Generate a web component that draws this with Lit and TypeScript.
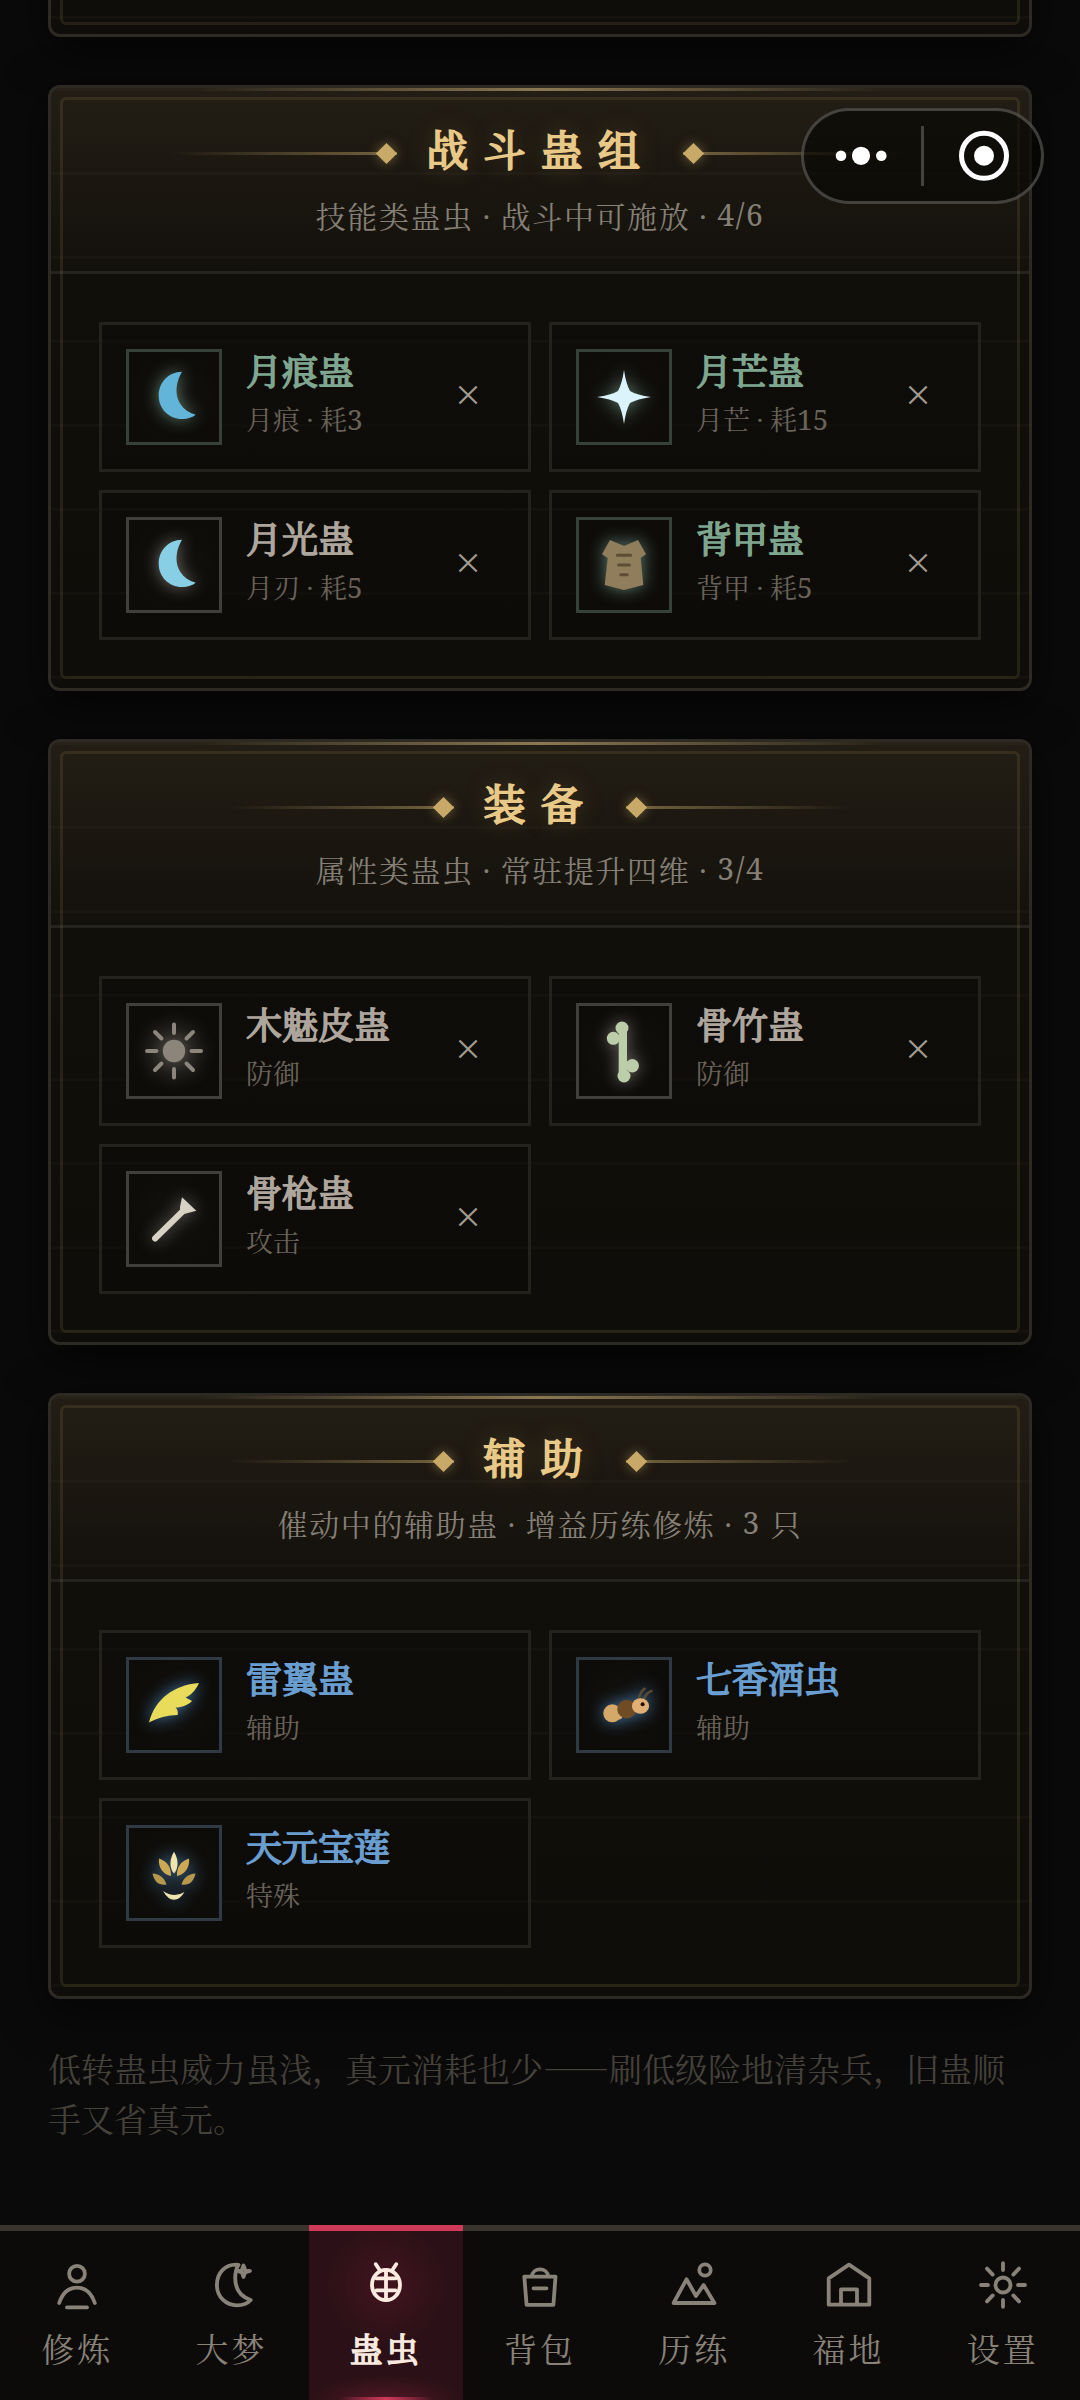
import { LitElement, html, svg, css, nothing } from "lit";
import { customElement, property } from "lit/decorators.js";

type Rank = "plain" | "green" | "blue";
interface Gu {
  name: string;
  kind: string;
  cost?: string;
  icon: string;
  rank: Rank;
  removable: boolean;
}
interface Group {
  title: string;
  lead: string;
  tail: string;
  count: string;
  unit?: string;
  items: Gu[];
}

const crescent =
  "M8 -25.3C-6 -25.3 -15.3 -14 -15.3 -1.5C-15.3 12 -5 22 8 22C14 22 19 20 21.7 17.7C8 14 2.5 3 2.5 -6C2.5 -14 5 -20 8 -25.3Z";

const guIcons: Record<string, unknown> = {
  moonScar: svg`<path d=${crescent} fill="#62b4d9"/>`,
  moonLight: svg`<path d=${crescent} fill="#88cfe6"/>`,
  star: svg`<path d="M0 -27Q2 -13 6 -6Q13 -2 27 0Q13 2 6 6Q2 13 0 27Q-2 13 -6 6Q-13 2 -27 0Q-13 -2 -6 -6Q-2 -13 0 -27Z" fill="#dbf3fb"/>`,
  armor: svg`<path d="M-14 -25L0 -19L14 -25L22 -10.7L16.7 -7L19.3 20L0 25L-19.3 20L-16.3 -7L-22 -10.7Z" fill="#8f7d5c"/>
    <path d="M-6.6 -9.7H6.6M-5.4 0H5.4M-3.2 9.7H3.2" stroke="#5f4d35" stroke-width="3" stroke-linecap="round"/>`,
  sun: svg`<circle r="11.2" fill="#8c857b"/>
    <path d="M0 -26.5V-18M0 18V26.5M-27 0H-17.5M17.5 0H27M-19 -19L-12.5 -12.5M19 -19L12.5 -12.5M-19 19L-12.5 12.5M19 19L12.5 12.5" stroke="#8c857b" stroke-width="4" stroke-linecap="round"/>`,
  bone: svg`<g fill="#bccdaa"><circle cx="-2" cy="-23" r="6.5"/><circle cx="-10.7" cy="-12.7" r="6.5"/><circle cx="8.3" cy="14.7" r="6.7"/><circle cx="0" cy="25" r="6.5"/><path d="M-5.3 -22H3V25H-5.3Z"/></g>`,
  spear: svg`<path d="M-19 19.5L9 -8" stroke="#d8d2c4" stroke-width="6" stroke-linecap="round"/>
    <path d="M8 -21.7L22.3 -8.3L12 -5.4Q8.5 -4.5 6 -8V-12Z" fill="#d8d2c4"/>`,
  wing: svg`<path d="M-25 17.6C-19 -6 0 -20 25 -22C22 -15 17 -10 11.5 -7.5L18 -4C14 0 8 2.5 1.5 2.5C3.7 4.5 4.2 7 3.7 10C-6 10 -17 13 -25 17.6Z" fill="#e8dc5a"/>`,
  worm: svg`<circle cx="-11.7" cy="8.3" r="9" fill="#d4a868"/><circle cx="-5.5" cy="10.5" r="4" fill="#d4a868"/>
    <ellipse cx="2.8" cy="4" rx="9.6" ry="9.2" fill="#6f4c24"/>
    <path d="M15 -6.5Q16 -13 20.5 -16.3M20 -6Q22 -12 27.5 -14" fill="none" stroke="#574a34" stroke-width="2.6" stroke-linecap="round"/>
    <ellipse cx="16.5" cy="1" rx="8.6" ry="7.8" fill="#e0b074"/><circle cx="18.6" cy="-.7" r="2" fill="#240a08"/>`,
  lotus: svg`<path d="M0 -21.3C5 -13 4.5 -5 0 .5C-4.500 -5 -5 -13 0 -21.3Z" fill="#efe3ae"/>
    <path d="M-15 -14.500C-6.500 -12 -2.500 -5 -3 3C-10.500 1.500 -16 -5 -15 -14.500Z M15 -14.500C6.500 -12 2.500 -5 3 3C10.500 1.500 16 -5 15 -14.500Z" fill="#cda953"/>
    <path d="M-21.500 .5C-14 1 -9.500 5 -7.500 11.500C-14 13 -20 9 -21.500 .5Z M21.500 .5C14 1 9.500 5 7.500 11.500C14 13 20 9 21.500 .5Z" fill="#b5984c"/>
    <path d="M-11 18Q0 25.500 10.500 19Q6 26.700 0 26.700Q-6 26.700 -11 18Z" fill="#efe3ae"/>`,
};

const navIcons: Record<string, unknown> = {
  person: svg`<circle cx="27" cy="15.700" r="7.900"/><path d="M9.200 45C12.500 35 19 29.600 27 29.600S41.500 35 44.800 45M17 49.400H37"/>`,
  moon: svg`<path d="M34.500 6.800C20.500 5.500 12.900 15.500 12.900 27C12.900 39 22 47.300 33 47.300C39 47.300 43.500 45.500 46.700 42C36 38.500 31.200 30 31.200 20C31.200 14 32.500 10 34.500 6.800Z"/><path d="M39.500 7.500L41 11.700L46 13L41 14.500L39.500 19L38 14.500L33.500 13L38 11.700Z"/>`,
  bug: svg`<ellipse cx="27" cy="27" rx="14" ry="15.200"/><path d="M27 12V42M17.500 20.300H36.500M17.500 32.300H36.500M16.800 6.200L20.800 12.200M37.200 6.200L33.200 12.200"/>`,
  bag: svg`<path d="M11.300 18.600H42.500L40.400 46.800H13.600ZM18.800 18.600C19.500 9 34.500 9 35.200 18.600M20.500 30.300H33.500"/>`,
  hills: svg`<circle cx="38" cy="12" r="5.700"/><path d="M6.600 45L19.500 21.300L29 38L36.600 27L47.400 45Z"/>`,
  house: svg`<path d="M27 6.700L47.300 20.300V46.700H6.700V20.300ZM19 46.700V31.300H35V46.700"/>`,
  gear: svg`<circle cx="27" cy="27" r="7.500"/><path d="M27 5.200V12M27 42V48.800M5 27H12M42 27H49M11 10.600L16.700 16.600M43 10.600L37.300 16.600M11 43.400L16.700 37.400M43 43.400L37.300 37.400"/>`,
};

const groups: Group[] = [
  {
    title: "战斗蛊组", lead: "技能类蛊虫", tail: "战斗中可施放", count: "4/6",
    items: [
      { name: "月痕蛊", kind: "月痕", cost: "3", icon: "moonScar", rank: "green", removable: true },
      { name: "月芒蛊", kind: "月芒", cost: "15", icon: "star", rank: "green", removable: true },
      { name: "月光蛊", kind: "月刃", cost: "5", icon: "moonLight", rank: "plain", removable: true },
      { name: "背甲蛊", kind: "背甲", cost: "5", icon: "armor", rank: "green", removable: true },
    ],
  },
  {
    title: "装备", lead: "属性类蛊虫", tail: "常驻提升四维", count: "3/4",
    items: [
      { name: "木魅皮蛊", kind: "防御", icon: "sun", rank: "plain", removable: true },
      { name: "骨竹蛊", kind: "防御", icon: "bone", rank: "plain", removable: true },
      { name: "骨枪蛊", kind: "攻击", icon: "spear", rank: "plain", removable: true },
    ],
  },
  {
    title: "辅助", lead: "催动中的辅助蛊", tail: "增益历练修炼", count: "3", unit: "只",
    items: [
      { name: "雷翼蛊", kind: "辅助", icon: "wing", rank: "blue", removable: false },
      { name: "七香酒虫", kind: "辅助", icon: "worm", rank: "blue", removable: false },
      { name: "天元宝莲", kind: "特殊", icon: "lotus", rank: "blue", removable: false },
    ],
  },
];

const tabs = [
  { label: "修炼", icon: "person" },
  { label: "大梦", icon: "moon" },
  { label: "蛊虫", icon: "bug", active: true },
  { label: "背包", icon: "bag" },
  { label: "历练", icon: "hills" },
  { label: "福地", icon: "house" },
  { label: "设置", icon: "gear" },
];

const panel = css`
  .panel {
    position: relative;
    box-sizing: border-box;
    border: 3px solid #2d2a23;
    border-radius: 12px;
    background:
      repeating-linear-gradient(180deg, rgba(200, 180, 140, 0.026) 0 3px, transparent 3px 84px),
      linear-gradient(180deg, #12100b, #0e0d09);
    background-clip: padding-box;
    box-shadow: 0 12px 48px rgba(0, 0, 0, 0.6);
  }
  .panel::after {
    content: "";
    position: absolute;
    inset: 9px;
    border: 3px solid rgba(160, 130, 85, 0.17);
    border-radius: 6px;
    pointer-events: none;
  }
`;

@customElement("gu-slot")
class GuSlot extends LitElement {
  @property({ attribute: false }) gu!: Gu;
  static styles = css`
    :host { display: block; }
    .slot {
      display: flex;
      align-items: center;
      gap: 24px;
      box-sizing: border-box;
      height: 150px;
      padding: 24px;
      border: 3px solid #23221d;
      background: rgba(8, 8, 6, 0.25);
    }
    .plain { --name: #aea69d; --edge: #413f3b; --glow: rgba(176, 168, 159, 0.6); }
    .green { --name: #7fa68f; --edge: #35413a; --glow: rgba(127, 166, 143, 0.7); }
    .blue { --name: #6a9ed0; --edge: #2f3a45; --glow: rgba(80, 145, 205, 0.78); }
    .frame {
      flex: none;
      display: grid;
      place-items: center;
      box-sizing: border-box;
      width: 96px;
      height: 96px;
      border: 3px solid var(--edge);
      background: radial-gradient(circle, #131210, #0d0c09 72%);
    }
    .art { width: 90px; height: 90px; overflow: hidden; filter: drop-shadow(0 0 8px var(--glow)); }
    .text { flex: 1; display: flex; flex-direction: column; gap: 4px; white-space: nowrap; padding-bottom: 9px; }
    .name { font-size: 36px; line-height: 48px; font-weight: 400; -webkit-text-stroke: 1.6px var(--name); color: var(--name); }
    .kind { font-size: 27px; line-height: 42px; font-weight: 400; color: #6a635a; }
    .dot { display: inline-block; width: 20px; text-align: center; }
    .num { font-family: "Noto Serif", "Noto Serif CJK SC", serif; font-size: 28px; line-height: 1; }
    .drop {
      flex: none;
      width: 72px;
      line-height: 72px;
      padding-bottom: 7px;
      text-align: center;
      font-family: "Noto Sans", sans-serif;
      font-size: 43px;
      font-weight: 300;
      color: #a09a8f;
    }
  `;
  render() {
    const g = this.gu;
    return html`<div class="slot ${g.rank}">
      <div class="frame"><svg class="art" viewBox="-45 -45 90 90">${guIcons[g.icon]}</svg></div>
      <div class="text">
        <div class="name">${g.name}</div>
        <div class="kind">${g.kind}${g.cost ? html`<span class="dot">·</span>耗<span class="num">${g.cost}</span>` : nothing}</div>
      </div>
      ${g.removable ? html`<div class="drop">×</div>` : nothing}
    </div>`;
  }
}

@customElement("gu-group")
class GuGroup extends LitElement {
  @property({ attribute: false }) group!: Group;
  static styles = [
    panel,
    css`
      :host { display: block; }
      .head {
        position: relative;
        box-sizing: border-box;
        height: 186px;
        padding-top: 31px;
        border-bottom: 3px solid #25231e;
        border-radius: 9px 9px 0 0;
        background: linear-gradient(180deg, rgba(180, 148, 105, 0.105), rgba(180, 148, 105, 0.01));
      }
      .head::before {
        content: "";
        position: absolute;
        top: 0;
        left: 15%;
        right: 15%;
        height: 3px;
        background: linear-gradient(90deg, transparent, #8b7853, transparent);
      }
      .title-row { display: flex; justify-content: center; align-items: center; gap: 28px; height: 60px; }
      .title {
        height: 60px;
        line-height: 58px;
        padding-left: 1.5px;
        font-size: 42px;
        font-weight: 400;
        letter-spacing: 15.2px;
        color: #e8c987;
        -webkit-text-stroke: 1.9px #e8c987;
        text-shadow: 0 0 24px rgba(201, 160, 90, 0.36);
      }
      .rule { position: relative; width: 225px; height: 3px; margin-top: 9px; background: linear-gradient(90deg, transparent, #75643f); }
      .rule.flip { background: linear-gradient(270deg, transparent, #75643f); }
      .gem {
        position: absolute;
        top: -6px;
        right: 3px;
        width: 15px;
        height: 15px;
        background: #c9a967;
        transform: rotate(45deg);
        box-shadow: 0 0 12px rgba(201, 169, 103, 0.5);
      }
      .flip .gem { right: auto; left: 3px; }
      .sub {
        display: flex;
        justify-content: center;
        margin-top: 15px;
        line-height: 42px;
        font-size: 30px;
        font-weight: 400;
        letter-spacing: 1.6px;
        color: #857f76;
      }
      .dot { width: 27px; text-align: center; }
      .num { font-family: "Noto Serif", "Noto Serif CJK SC", serif; font-size: 30px; }
      .unit { margin-left: 10px; }
      .grid { display: grid; grid-template-columns: 1fr 1fr; gap: 18px; padding: 48px; }
    `,
  ];
  render() {
    const g = this.group;
    return html`<section class="panel">
      <header class="head">
        <div class="title-row">
          <div class="rule"><i class="gem"></i></div>
          <div class="title">${g.title}</div>
          <div class="rule flip"><i class="gem"></i></div>
        </div>
        <div class="sub">
          <span>${g.lead}</span><span class="dot">·</span><span>${g.tail}</span><span class="dot">·</span><span class="num">${g.count}</span>${g.unit ? html`<span class="unit">${g.unit}</span>` : nothing}
        </div>
      </header>
      <div class="grid">${g.items.map((i) => html`<gu-slot .gu=${i}></gu-slot>`)}</div>
    </section>`;
  }
}

@customElement("app-root")
class AppRoot extends LitElement {
  static styles = [
    panel,
    css`
      :host {
        display: block;
        font-family: "Noto Serif CJK SC", "Noto Serif SC", "Noto Sans CJK SC", serif;
      }
      .page {
        position: relative;
        display: flex;
        flex-direction: column;
        width: 1080px;
        height: 2400px;
        overflow: hidden;
        background: #0a0a0a;
      }
      .scroll { flex: 1; display: flex; flex-direction: column; gap: 48px; padding: 0 48px; min-height: 0; }
      .previous { flex: none; height: 192px; margin-top: -155px; }
      .note { margin: -4px 0 0; font-size: 33px; line-height: 49.5px; font-weight: 400; color: #45413b; }
      .capsule {
        position: absolute;
        top: 108px;
        left: 801px;
        box-sizing: border-box;
        width: 243px;
        height: 96px;
        border: 3px solid rgba(255, 255, 255, 0.22);
        border-radius: 48px;
        background: rgba(6, 6, 4, 0.62);
      }
      .capsule svg { display: block; width: 237px; height: 90px; }
      .nav {
        flex: none;
        display: grid;
        grid-template-columns: repeat(7, 1fr);
        height: 175px;
        background: #0d0b09;
      }
      .tab {
        position: relative;
        display: flex;
        flex-direction: column;
        align-items: center;
        gap: 15px;
        padding-top: 27px;
        border-top: 6px solid #3a352c;
        color: #888278;
      }
      .tab svg { width: 54px; height: 54px; fill: none; stroke: currentColor; stroke-width: 3.8; stroke-linecap: round; stroke-linejoin: round; }
      .label { font-size: 33px; line-height: 42px; letter-spacing: 3px; font-weight: 400; }
      .active {
        color: #fbeadf;
        border-top-color: #cf3a58;
        background:
          radial-gradient(circle at 50% 54px, rgba(150, 30, 60, 0.22), transparent 60px),
          radial-gradient(ellipse 75px 24px at 50% 100%, rgba(190, 45, 80, 0.25), transparent),
          #2b1117;
      }
      .active .label { -webkit-text-stroke: 1.5px #fbeadf; }
      .active::after {
        content: "";
        position: absolute;
        bottom: 0;
        left: 30px;
        right: 30px;
        height: 3px;
        background: linear-gradient(90deg, transparent, #d23a5c, transparent);
      }
    `,
  ];
  render() {
    return html`<div class="page" lang="zh-CN">
      <main class="scroll">
        <div class="panel previous"></div>
        ${groups.map((g) => html`<gu-group .group=${g}></gu-group>`)}
        <p class="note">低转蛊虫威力虽浅，真元消耗也少——刷低级险地清杂兵，旧蛊顺手又省真元。</p>
      </main>
      <nav class="nav">
        ${tabs.map((t) => html`<div class="tab ${t.active ? "active" : ""}">
          <svg viewBox="0 0 54 54">${navIcons[t.icon]}</svg><div class="label">${t.label}</div>
        </div>`)}
      </nav>
      <div class="capsule">
        <svg viewBox="804 111 237 90">
          <g fill="#fff"><circle cx="841" cy="155.800" r="5.300"/><circle cx="861" cy="155.800" r="9.100"/><circle cx="881.300" cy="155.800" r="5.300"/><circle cx="984" cy="155.800" r="10"/></g>
          <path d="M922.500 126V186" stroke="#45433f" stroke-width="3"/>
          <circle cx="984" cy="155.800" r="22.500" fill="none" stroke="#fff" stroke-width="5"/>
        </svg>
      </div>
    </div>`;
  }
}
